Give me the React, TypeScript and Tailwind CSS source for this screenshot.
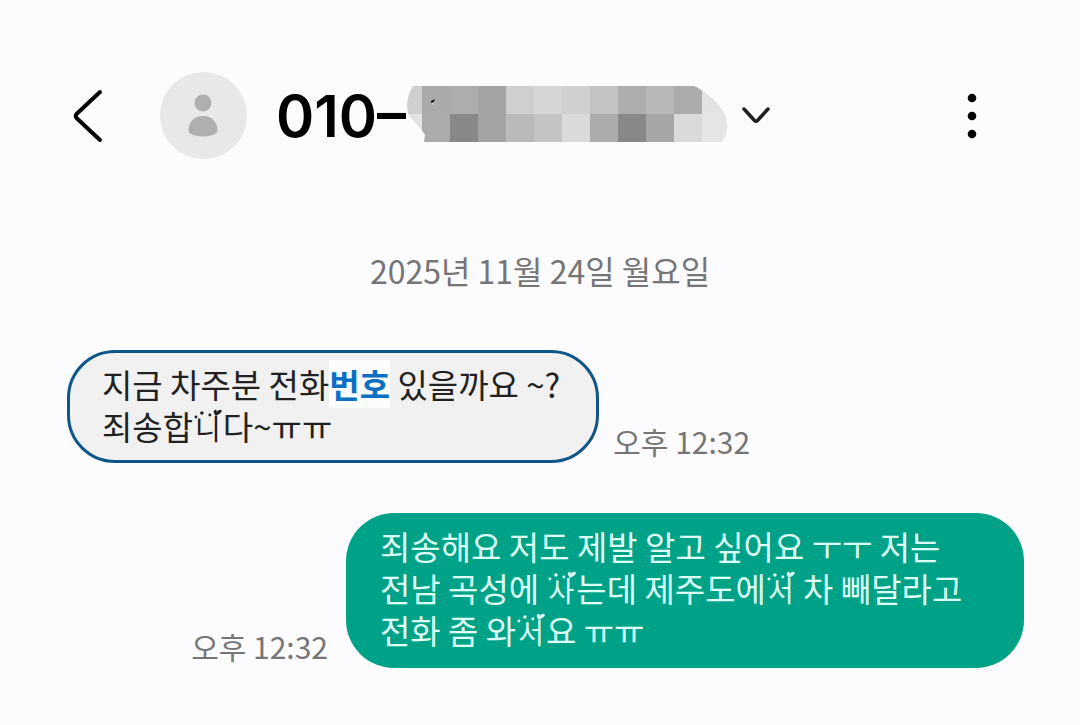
import React from "react";

const CELL = 28;
const TOP_ROW = ["#aaaaaa", "#adadad", "#a3a3a5", "#cfcfcf", "#d6d6d8", "#d0d0d0", "#c3c3c3", "#adadad", "#b8b8b8", "#acacae", "#e2e2e2"];
const BOTTOM_ROW = ["#ababab", "#888888", "#a3a3a5", "#bababa", "#c4c4c6", "#dadadc", "#acacac", "#888888", "#a6a6a6", "#dadada", "#e5e5e5"];

function MaskedNumber() {
  return (
    <svg className="mb-1 h-14 w-[322px] shrink-0" viewBox="0 0 322 56" role="img" aria-label="가려진 번호">
      <defs>
        <clipPath id="mask-shape">
          <path d="M7 0H288C298 4 310 15 315 22C320 29 322 36 321 43C320 49 318 53 316 56H18L19 49L15 43L3 30C0 22 0 12 7 0Z" />
        </clipPath>
      </defs>
      <g clipPath="url(#mask-shape)" shapeRendering="crispEdges">
        <rect width="16" height="28" fill="#cfcfd0" />
        <rect y="28" width="16" height="28" fill="#e2e2e2" />
        {TOP_ROW.map((c, i) => (
          <rect key={i} x={16 + i * CELL} y="0" width={CELL} height={CELL} fill={c} />
        ))}
        {BOTTOM_ROW.map((c, i) => (
          <rect key={i} x={16 + i * CELL} y={CELL} width={CELL} height={CELL} fill={c} />
        ))}
      </g>
      <path d="M25 15L29 13L27 18L25 16Z" fill="#050505" />
      <path d="M26 17L28 16L27 19Z" fill="#fff" />
    </svg>
  );
}

function Smile({ children }: { children: string }) {
  return (
    <span className="relative px-[2px] text-[28px] leading-8">
      {children}
      <svg className="absolute -top-0.5 left-0 h-4 w-full" viewBox="0 0 30 16" fill="currentColor" aria-hidden="true">
        <circle cx="3" cy="11" r="1.5" />
        <circle cx="9" cy="7" r="1.8" />
        <circle cx="17" cy="9" r="1.5" />
        <path d="M23 10C21 7 20 5 22 4C23 3.500 24 4 24 6C25 4 28 3 29 4.500C29.500 6 27 8 23 10Z" />
      </svg>
    </span>
  );
}

export default function App() {
  return (
    <main className="min-h-screen bg-[#fcfcfe] pb-14 pt-[72px] font-['Noto_Sans_CJK_KR',sans-serif] text-[#222222]">
      <header className="flex h-[88px] items-center pl-[72px] pr-[88px]">
        <button type="button" aria-label="뒤로" className="shrink-0">
          <svg className="h-[54px] w-8" viewBox="0 0 32 54" fill="none" stroke="#050505" strokeWidth="4" strokeLinecap="round" strokeLinejoin="round">
            <path d="M28 3L4.500 25Q3 27 4.500 29L28 51" />
          </svg>
        </button>
        <svg className="ml-14 h-[88px] w-[88px] shrink-0" viewBox="0 0 88 88" aria-hidden="true">
          <circle cx="43.500" cy="43.500" r="43.500" fill="#e8e8e8" />
          <circle cx="43" cy="31" r="8.500" fill="#afafaf" />
          <path d="M28.500 59C28.500 50 34 44 43 44C52 44 57.500 50 57.500 59C57.500 62 50 64.500 43 64.500C36 64.500 28.500 62 28.500 59Z" fill="#afafaf" />
        </svg>
        <h1 className="ml-7 flex items-center whitespace-nowrap font-['Inter','Noto_Sans_CJK_KR',sans-serif] text-[58px] font-semibold leading-[64px] text-black">
          010–
          <MaskedNumber />
        </h1>
        <button type="button" aria-label="연락처 정보 열기" className="ml-3 shrink-0">
          <svg className="h-5 w-8" viewBox="0 0 32 20" fill="none" stroke="#202024" strokeWidth="3.500" strokeLinecap="round" strokeLinejoin="round">
            <path d="M4 3L14.500 14.500Q16 16 17.500 14.500L28 3" />
          </svg>
        </button>
        <button type="button" aria-label="더보기" className="ml-auto shrink-0">
          <svg className="h-12 w-10" viewBox="0 0 40 48" fill="#050505">
            <circle cx="20" cy="6" r="4.300" />
            <circle cx="20" cy="24" r="4.300" />
            <circle cx="20" cy="42" r="4.300" />
          </svg>
        </button>
      </header>

      <p className="mt-[90px] text-center text-[32px] leading-10 text-[#757575]">2025년 11월 24일 월요일</p>

      <section className="mt-[60px] flex flex-col gap-[50px] break-keep px-14">
        <article className="ml-[11px] flex items-end gap-[14px]">
          <p className="rounded-[48px] border-[3px] border-[#0f5688] bg-[#f1f1f1] pb-[13px] pl-8 pr-9 pt-[10px] text-[33px] leading-[42px]">
            지금 차주분 전화<a href="#number" className="bg-[#fcfcfe] font-bold text-[#0b70c4]">번호</a> 있을까요 ~?
            <br />
            죄송합<Smile>니</Smile>다~ㅠㅠ
          </p>
          <time className="mb-[2px] shrink-0 text-[30px] leading-10 text-[#757575]">오후 12:32</time>
        </article>
        <article className="flex items-end justify-end gap-[18px]">
          <time className="mb-[2px] shrink-0 text-[30px] leading-10 text-[#757575]">오후 12:32</time>
          <p className="max-w-[678px] rounded-[48px] bg-[#00a287] px-[34px] pb-[17px] pt-3 text-[33px] leading-[42px] text-[#dcfff6]">
            죄송해요 저도 제발 알고 싶어요 ㅜㅜ 저는 전남 곡성에 <Smile>사</Smile>는데 제주도에<Smile>서</Smile> 차 빼달라고 전화 좀 와<Smile>서</Smile>요 ㅠㅠ
          </p>
        </article>
      </section>
    </main>
  );
}
